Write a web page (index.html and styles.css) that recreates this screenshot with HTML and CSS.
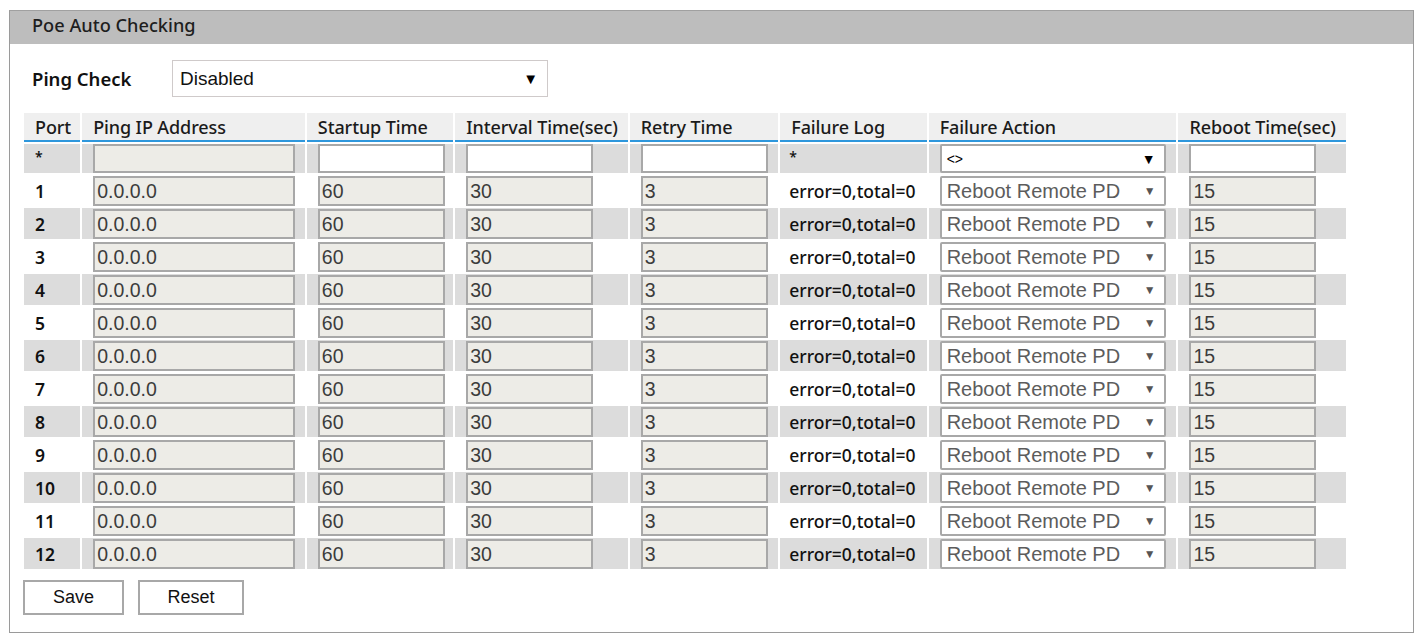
FILE: index.html
```html
<!DOCTYPE html>
<html>
<head>
<meta charset="utf-8">
<title>Poe Auto Checking</title>
<link rel="stylesheet" href="styles.css">
</head>
<body>
<div class="panel">
  <div class="panel-head">Poe Auto Checking</div>
  <div class="panel-body">
    <div class="ping-row">
      <span class="ping-label">Ping Check</span>
      <div class="sel sel-main"><span>Disabled</span><span class="arrow">▼</span></div>
    </div>
    <table class="grid">
      <colgroup>
        <col class="c-port"><col class="c-ip"><col class="c-start"><col class="c-int"><col class="c-retry"><col class="c-log"><col class="c-act"><col class="c-reboot">
      </colgroup>
      <thead>
        <tr><th>Port</th><th>Ping IP Address</th><th>Startup Time</th><th>Interval Time(sec)</th><th>Retry Time</th><th>Failure Log</th><th>Failure Action</th><th>Reboot Time(sec)</th></tr>
      </thead>
      <tbody>
        <tr class="alt star">
          <td class="port">*</td>
          <td><div class="inp w-ip dis"></div></td>
          <td><div class="inp w-s"></div></td>
          <td><div class="inp w-s"></div></td>
          <td><div class="inp w-s"></div></td>
          <td class="log">*</td>
          <td><div class="sel sel-row sel-any"><span>&lt;&gt;</span><span class="arrow">▼</span></div></td>
          <td><div class="inp w-s"></div></td>
        </tr>
        <tr><td class="port">1</td><td><div class="inp w-ip dis">0.0.0.0</div></td><td><div class="inp w-s dis">60</div></td><td><div class="inp w-s dis">30</div></td><td><div class="inp w-s dis">3</div></td><td class="log">error=0,total=0</td><td><div class="sel sel-row"><span>Reboot Remote PD</span><span class="arrow">▼</span></div></td><td><div class="inp w-s dis">15</div></td></tr>
        <tr class="alt"><td class="port">2</td><td><div class="inp w-ip dis">0.0.0.0</div></td><td><div class="inp w-s dis">60</div></td><td><div class="inp w-s dis">30</div></td><td><div class="inp w-s dis">3</div></td><td class="log">error=0,total=0</td><td><div class="sel sel-row"><span>Reboot Remote PD</span><span class="arrow">▼</span></div></td><td><div class="inp w-s dis">15</div></td></tr>
        <tr><td class="port">3</td><td><div class="inp w-ip dis">0.0.0.0</div></td><td><div class="inp w-s dis">60</div></td><td><div class="inp w-s dis">30</div></td><td><div class="inp w-s dis">3</div></td><td class="log">error=0,total=0</td><td><div class="sel sel-row"><span>Reboot Remote PD</span><span class="arrow">▼</span></div></td><td><div class="inp w-s dis">15</div></td></tr>
        <tr class="alt"><td class="port">4</td><td><div class="inp w-ip dis">0.0.0.0</div></td><td><div class="inp w-s dis">60</div></td><td><div class="inp w-s dis">30</div></td><td><div class="inp w-s dis">3</div></td><td class="log">error=0,total=0</td><td><div class="sel sel-row"><span>Reboot Remote PD</span><span class="arrow">▼</span></div></td><td><div class="inp w-s dis">15</div></td></tr>
        <tr><td class="port">5</td><td><div class="inp w-ip dis">0.0.0.0</div></td><td><div class="inp w-s dis">60</div></td><td><div class="inp w-s dis">30</div></td><td><div class="inp w-s dis">3</div></td><td class="log">error=0,total=0</td><td><div class="sel sel-row"><span>Reboot Remote PD</span><span class="arrow">▼</span></div></td><td><div class="inp w-s dis">15</div></td></tr>
        <tr class="alt"><td class="port">6</td><td><div class="inp w-ip dis">0.0.0.0</div></td><td><div class="inp w-s dis">60</div></td><td><div class="inp w-s dis">30</div></td><td><div class="inp w-s dis">3</div></td><td class="log">error=0,total=0</td><td><div class="sel sel-row"><span>Reboot Remote PD</span><span class="arrow">▼</span></div></td><td><div class="inp w-s dis">15</div></td></tr>
        <tr><td class="port">7</td><td><div class="inp w-ip dis">0.0.0.0</div></td><td><div class="inp w-s dis">60</div></td><td><div class="inp w-s dis">30</div></td><td><div class="inp w-s dis">3</div></td><td class="log">error=0,total=0</td><td><div class="sel sel-row"><span>Reboot Remote PD</span><span class="arrow">▼</span></div></td><td><div class="inp w-s dis">15</div></td></tr>
        <tr class="alt"><td class="port">8</td><td><div class="inp w-ip dis">0.0.0.0</div></td><td><div class="inp w-s dis">60</div></td><td><div class="inp w-s dis">30</div></td><td><div class="inp w-s dis">3</div></td><td class="log">error=0,total=0</td><td><div class="sel sel-row"><span>Reboot Remote PD</span><span class="arrow">▼</span></div></td><td><div class="inp w-s dis">15</div></td></tr>
        <tr><td class="port">9</td><td><div class="inp w-ip dis">0.0.0.0</div></td><td><div class="inp w-s dis">60</div></td><td><div class="inp w-s dis">30</div></td><td><div class="inp w-s dis">3</div></td><td class="log">error=0,total=0</td><td><div class="sel sel-row"><span>Reboot Remote PD</span><span class="arrow">▼</span></div></td><td><div class="inp w-s dis">15</div></td></tr>
        <tr class="alt"><td class="port">10</td><td><div class="inp w-ip dis">0.0.0.0</div></td><td><div class="inp w-s dis">60</div></td><td><div class="inp w-s dis">30</div></td><td><div class="inp w-s dis">3</div></td><td class="log">error=0,total=0</td><td><div class="sel sel-row"><span>Reboot Remote PD</span><span class="arrow">▼</span></div></td><td><div class="inp w-s dis">15</div></td></tr>
        <tr><td class="port">11</td><td><div class="inp w-ip dis">0.0.0.0</div></td><td><div class="inp w-s dis">60</div></td><td><div class="inp w-s dis">30</div></td><td><div class="inp w-s dis">3</div></td><td class="log">error=0,total=0</td><td><div class="sel sel-row"><span>Reboot Remote PD</span><span class="arrow">▼</span></div></td><td><div class="inp w-s dis">15</div></td></tr>
        <tr class="alt"><td class="port">12</td><td><div class="inp w-ip dis">0.0.0.0</div></td><td><div class="inp w-s dis">60</div></td><td><div class="inp w-s dis">30</div></td><td><div class="inp w-s dis">3</div></td><td class="log">error=0,total=0</td><td><div class="sel sel-row"><span>Reboot Remote PD</span><span class="arrow">▼</span></div></td><td><div class="inp w-s dis">15</div></td></tr>
      </tbody>
    </table>
    <div class="actions">
      <button class="btn btn-save">Save</button>
      <button class="btn btn-reset">Reset</button>
    </div>
  </div>
</div>
</body>
</html>
```

FILE: styles.css
```css
html, body {
  margin: 0;
  padding: 0;
  background: #ffffff;
}

body {
  font-family: "Noto Sans", "Open Sans", sans-serif;
  color: #222;
  padding: 10px 7px 0 9px;
}

.panel {
  border: 1px solid #9a9a9a;
  border-top-color: #a0a0a0;
  height: 623px;
  box-sizing: border-box;
}

.panel-head {
  background: #bdbdbd;
  height: 33px;
  line-height: 29px;
  padding-left: 22px;
  font-size: 18.2px;
  font-weight: 500;
  color: #1e1e1e;
}

.panel-body {
  padding: 16px 12px 0 12px;
}

.ping-row {
  display: flex;
  align-items: center;
  padding-left: 10px;
  height: 37px;
}

.ping-label {
  width: 140px;
  font-size: 18.5px;
  font-weight: 600;
  color: #111;
}

.sel {
  display: flex;
  align-items: center;
  justify-content: space-between;
  box-sizing: border-box;
  font-family: "Liberation Sans", Arial, sans-serif;
  background: #fff;
}

.sel-main {
  width: 376px;
  height: 37px;
  border: 1px solid #cfcaca;
  padding: 0 9px 0 7px;
  font-size: 19px;
  color: #111;
}

.sel-main .arrow {
  font-size: 15px;
  color: #000;
}

.grid {
  margin-top: 14px;
  border-collapse: separate;
  border-spacing: 2px;
  table-layout: fixed;
  width: 1326px;
}

.c-port { width: 56px; }
.c-ip { width: 222px; }
.c-start { width: 146px; }
.c-int { width: 172px; }
.c-retry { width: 148px; }
.c-log { width: 146px; }
.c-act { width: 247px; }
.c-reboot { width: 167px; }

.grid th {
  background: #efefef;
  height: 27px;
  padding: 0 0 0 11px;
  text-align: left;
  font-weight: 500;
  font-size: 18px;
  letter-spacing: -0.1px;
  color: #1b1b1b;
  border-bottom: 2px solid #2e97dc;
  white-space: nowrap;
  vertical-align: middle;
  line-height: 24px;
}

.grid td {
  height: 31px;
  padding: 0 0 0 11px;
  vertical-align: middle;
  white-space: nowrap;
  line-height: 20px;
}

.grid td.log {
  padding-left: 9px;
}

.grid tr.alt td {
  background: #dcdcdc;
}

.grid tr.star td {
  height: 29px;
}

.port {
  font-size: 17.5px;
  font-weight: 600;
  color: #111;
}

.grid tr.star td.port,
.grid tr.star td.log {
  font-size: 14px;
  vertical-align: top;
  line-height: 26px;
}

.log {
  font-size: 17.5px;
  font-weight: 500;
  color: #111;
}

.inp {
  box-sizing: border-box;
  height: 30px;
  border: 2px solid #a8a8a8;
  background: #fff;
  font-family: "Liberation Sans", Arial, sans-serif;
  font-size: 19.5px;
  line-height: 26px;
  padding-left: 2px;
  color: #3c3c3c;
}

.star .inp {
  height: 29px;
}

.inp.dis {
  background: #edece7;
}

.w-ip { width: 202px; }
.w-s { width: 127px; }

.sel-row {
  width: 226px;
  height: 30px;
  border: 2px solid #a8a8a8;
  border-radius: 2px;
  padding: 0 8px 0 5px;
  font-size: 20px;
  color: #5c5c5c;
}

.sel-row .arrow {
  font-size: 12px;
  color: #555;
}

.star .sel-row {
  height: 29px;
}

.sel-any {
  font-size: 14px;
  color: #000;
}

.sel-any .arrow {
  font-size: 14px;
  color: #000;
}

.actions {
  display: flex;
  gap: 14px;
  margin-top: 9px;
  padding-left: 1px;
}

.btn {
  height: 35px;
  background: #fff;
  border: 2px solid #a8a8a8;
  font-family: "Liberation Sans", Arial, sans-serif;
  font-size: 18px;
  color: #111;
  padding: 0;
}

.btn-save { width: 101px; }
.btn-reset { width: 106px; }
```
